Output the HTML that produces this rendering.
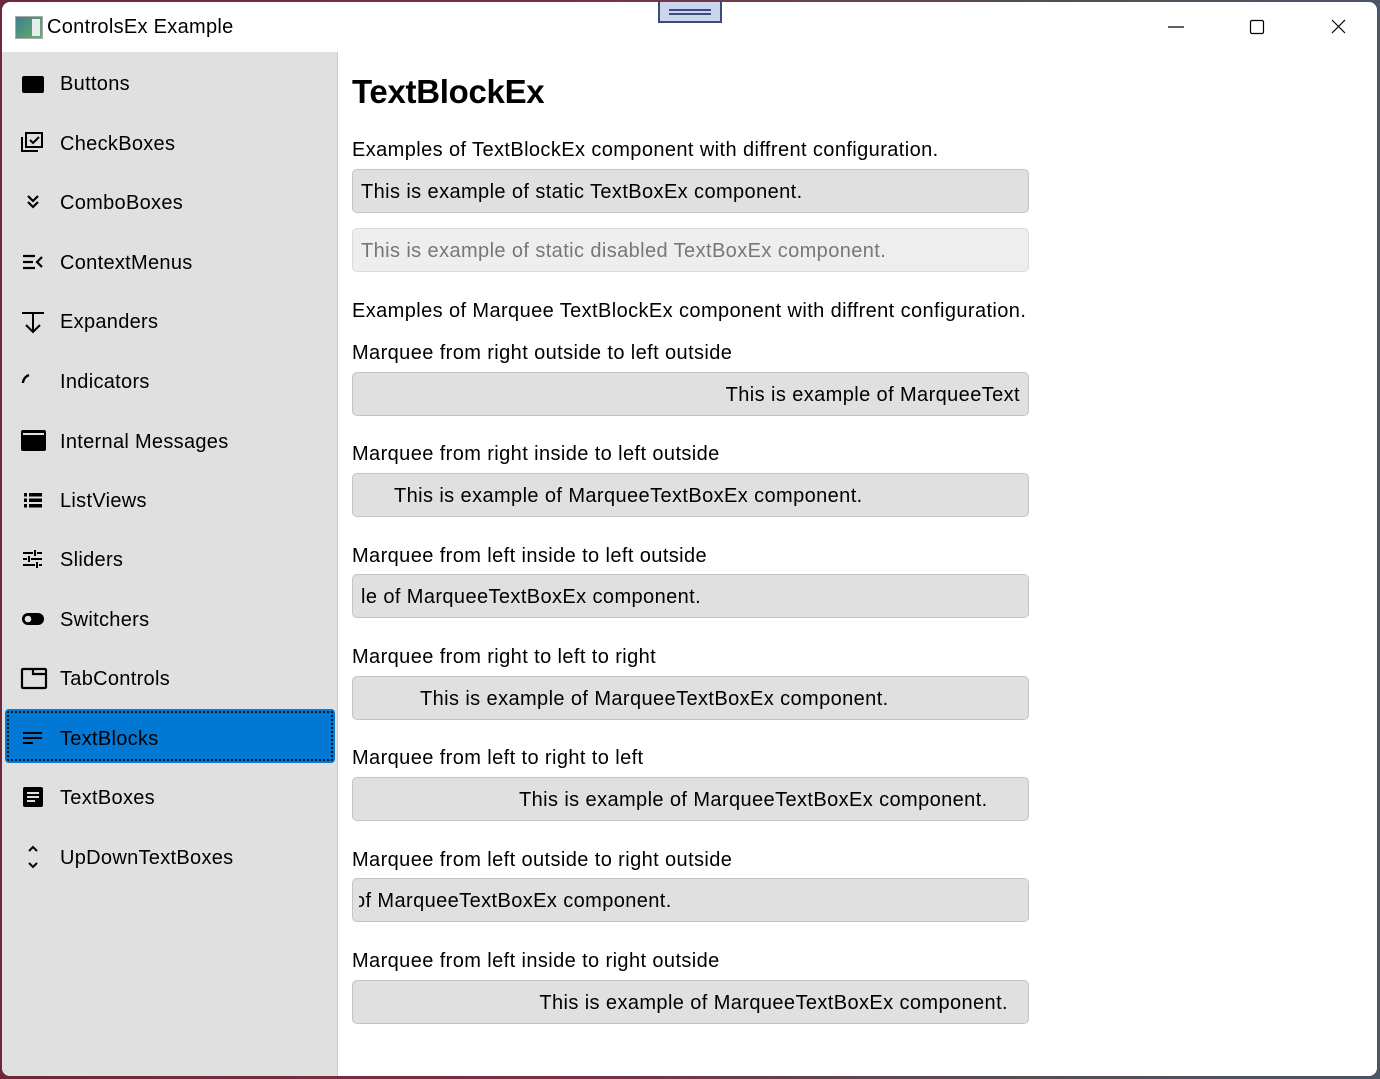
<!DOCTYPE html>
<html><head><meta charset="utf-8">
<style>
*{box-sizing:border-box;margin:0;padding:0}
body{width:1380px;height:1079px;overflow:hidden;background:linear-gradient(90deg,#6a2a3c,#7a2f45 40%,#5a4a55 70%,#4a5565);font-family:"Liberation Sans",sans-serif;color:#000;position:relative}
#win{position:absolute;left:2px;top:2px;width:1375px;height:1074px;background:#fff;border-radius:8px;overflow:hidden}
.title{position:absolute;left:45px;top:14px;font-size:20px;letter-spacing:.3px}
.appicon{position:absolute;left:13px;top:14px;width:28px;height:23px;border:1px solid #aaa;background:linear-gradient(135deg,#3d7f8a,#6ab06a);}
.appicon:after{content:"";position:absolute;right:2px;top:2px;width:8px;height:17px;background:#e8ecee}
.grip{position:absolute;left:656px;top:-2px;width:64px;height:23px;background:#cbd5ef;border:2px solid #3d4a7a}
.grip:before,.grip:after{content:"";position:absolute;left:9px;width:42px;height:2px;background:#3d4a7a}
.grip:before{top:7px}.grip:after{top:11px}
#side{position:absolute;left:0;top:50px;width:336px;height:1030px;background:#e0e0e0;border-right:1px solid #c8c8c8}
.it{position:absolute;left:58px;font-size:20px;line-height:24px;letter-spacing:.3px}
.ic{position:absolute;left:18px;width:24px;height:24px}
.sel{position:absolute;left:3px;top:657px;width:330px;height:54px;background:#0078d4;border-radius:4px;outline:2px dotted #111;outline-offset:-4px}
h1{position:absolute;left:350px;top:71px;font-size:33px;font-weight:bold;letter-spacing:-.3px}
.lb{position:absolute;left:350px;font-size:20px;line-height:24px;white-space:nowrap;letter-spacing:.4px}
.bx{position:absolute;left:350px;width:677px;height:44px;background:#e0e0e0;border:1px solid #c4c4c4;border-radius:5px;overflow:hidden}
.bx .cl{position:absolute;left:6px;right:6px;top:0;bottom:0;overflow:hidden}
.bx span{position:absolute;top:10px;font-size:20px;line-height:24px;white-space:nowrap;letter-spacing:.4px}
.dis{background:#eeeeee;border-color:#dcdcdc;color:#777}
</style></head><body>
<div id="win">
<div class="appicon"></div>
<div class="title">ControlsEx Example</div>
<div class="grip"></div>
<svg style="position:absolute;left:1160px;top:13px" width="200" height="24" fill="none" stroke="#000" stroke-width="1.2">
<line x1="6" y1="12" x2="22" y2="12"/>
<rect x="88.5" y="5.5" width="13" height="13" rx="1.5"/>
<path d="M170 5 L183 18 M183 5 L170 18"/>
</svg>
<div id="side">
<div class="sel"></div>
<svg class="ic" style="top:20px" viewBox="0 0 24 24"><rect x="2" y="4" width="22" height="17" rx="2" fill="#000"/></svg><div class="it" style="top:20px">Buttons</div>
<svg class="ic" style="top:79px" viewBox="0 0 24 24" fill="none" stroke="#000" stroke-width="2"><path d="M2 6v14h16"/><path d="M6 2h16v14H6z"/><path d="M10 9l3 3 6-6"/></svg><div class="it" style="top:80px">CheckBoxes</div>
<svg class="ic" style="top:139px" viewBox="0 0 24 24" fill="none" stroke="#000" stroke-width="2.2"><path d="M8 5l5 5 5-5M8 11l5 5 5-5"/></svg><div class="it" style="top:139px">ComboBoxes</div>
<svg class="ic" style="top:198px" viewBox="0 0 24 24" fill="none" stroke="#000" stroke-width="2.2"><path d="M3 6h12M3 12h10M3 18h12M22 7l-5 5 5 5"/></svg><div class="it" style="top:199px">ContextMenus</div>
<svg class="ic" style="top:258px" viewBox="0 0 24 24" fill="none" stroke="#000" stroke-width="2"><path d="M2 3h22M13 3v19M6 15l7 7 7-7"/></svg><div class="it" style="top:258px">Expanders</div>
<svg class="ic" style="top:318px" viewBox="0 0 24 24" fill="none" stroke="#000" stroke-width="2.4"><path d="M3 13C3 9 6 6 9 5"/></svg><div class="it" style="top:318px">Indicators</div>
<svg class="ic" style="top:376px;left:17px;width:28px" viewBox="0 0 28 24"><rect x="2" y="2" width="25" height="21" rx="2" fill="#000"/><rect x="4" y="5" width="21" height="2" fill="#e0e0e0"/></svg><div class="it" style="top:378px">Internal Messages</div>
<svg class="ic" style="top:436px" viewBox="0 0 24 24" fill="#000"><rect x="4" y="5" width="3" height="3.5"/><rect x="9" y="5" width="13" height="3.5"/><rect x="4" y="10.5" width="3" height="3.5"/><rect x="9" y="10.5" width="13" height="3.5"/><rect x="4" y="16" width="3" height="3.5"/><rect x="9" y="16" width="13" height="3.5"/></svg><div class="it" style="top:437px">ListViews</div>
<svg class="ic" style="top:495px" viewBox="0 0 24 24" fill="none" stroke="#000" stroke-width="2"><path d="M3 6h10M17 6h5M15 3v6M3 12h4M11 12h11M9 9v6M3 18h12M19 18h3M17 15v6"/></svg><div class="it" style="top:496px">Sliders</div>
<svg class="ic" style="top:555px" viewBox="0 0 24 24"><rect x="2" y="6" width="22" height="12" rx="6" fill="#000"/><circle cx="8" cy="12" r="3.3" fill="#e0e0e0"/></svg><div class="it" style="top:556px">Switchers</div>
<svg class="ic" style="top:614px;left:18px;width:28px" viewBox="0 0 28 24" fill="none" stroke="#000" stroke-width="2.2"><rect x="2" y="3" width="24" height="19" rx="1"/><path d="M13 3v5h13"/></svg><div class="it" style="top:615px">TabControls</div>
<svg class="ic" style="top:674px" viewBox="0 0 24 24" fill="none" stroke="#000" stroke-width="2"><path d="M3 7h19M3 12h19M3 17h10"/></svg><div class="it" style="top:675px">TextBlocks</div>
<svg class="ic" style="top:733px" viewBox="0 0 24 24"><rect x="3" y="2" width="20" height="20" rx="2" fill="#000"/><path d="M7 8h12M7 12h12M7 16h8" stroke="#e0e0e0" stroke-width="2"/></svg><div class="it" style="top:734px">TextBoxes</div>
<svg class="ic" style="top:793px" viewBox="0 0 24 24" fill="none" stroke="#000" stroke-width="2"><path d="M9 6l4-4 4 4M9 18l4 4 4-4"/></svg><div class="it" style="top:794px">UpDownTextBoxes</div>
</div>
<h1>TextBlockEx</h1>
<div class="lb" style="top:136px">Examples of TextBlockEx component with diffrent configuration.</div>
<div class="bx" style="top:167px"><div class="cl"><span style="left:2px">This is example of static TextBoxEx component.</span></div></div>
<div class="bx dis" style="top:226px"><div class="cl"><span style="left:2px">This is example of static disabled TextBoxEx component.</span></div></div>
<div class="lb" style="top:297px">Examples of Marquee TextBlockEx component with diffrent configuration.</div>
<div class="lb" style="top:339px">Marquee from right outside to left outside</div>
<div class="bx" style="top:370px"><div class="cl"><span style="right:2px">This is example of MarqueeText</span></div></div>
<div class="lb" style="top:440px">Marquee from right inside to left outside</div>
<div class="bx" style="top:471px"><div class="cl"><span style="left:35px">This is example of MarqueeTextBoxEx component.</span></div></div>
<div class="lb" style="top:542px">Marquee from left inside to left outside</div>
<div class="bx" style="top:572px"><div class="cl"><span style="left:2px">le of MarqueeTextBoxEx component.</span></div></div>
<div class="lb" style="top:643px">Marquee from right to left to right</div>
<div class="bx" style="top:674px"><div class="cl"><span style="left:61px">This is example of MarqueeTextBoxEx component.</span></div></div>
<div class="lb" style="top:744px">Marquee from left to right to left</div>
<div class="bx" style="top:775px"><div class="cl"><span style="left:160px">This is example of MarqueeTextBoxEx component.</span></div></div>
<div class="lb" style="top:846px">Marquee from left outside to right outside</div>
<div class="bx" style="top:876px"><div class="cl"><span style="left:-5px">of MarqueeTextBoxEx component.</span></div></div>
<div class="lb" style="top:947px">Marquee from left inside to right outside</div>
<div class="bx" style="top:978px"><div class="cl"><span style="right:14px">This is example of MarqueeTextBoxEx component.</span></div></div>
</div>
</body></html>
